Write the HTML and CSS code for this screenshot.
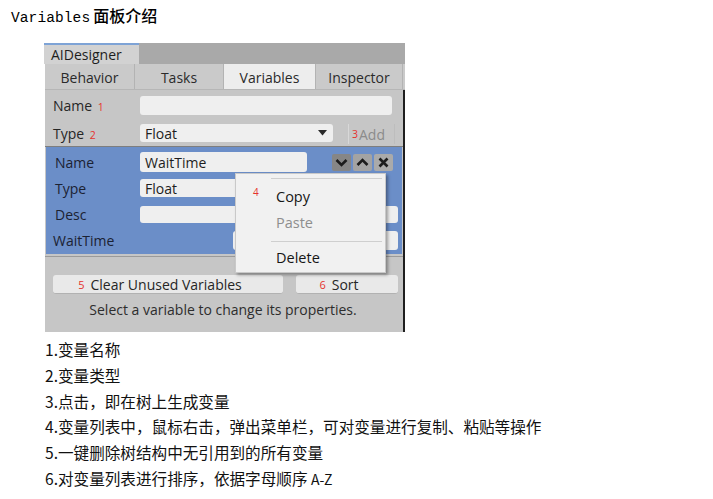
FILE: index.html
```html
<!DOCTYPE html>
<html lang="zh">
<head>
<meta charset="utf-8">
<title>Variables 面板介绍</title>
<link rel="stylesheet" href="styles.css">
</head>
<body>
<div class="title"><span class="title-lat">Variables</span><span class="title-cjk">面板介绍</span></div>

<div class="panel">
  <div class="head"><div class="head-tab">AIDesigner</div></div>
  <div class="toolbar">
    <div class="tb tb-behavior">Behavior</div>
    <div class="tb tb-tasks">Tasks</div>
    <div class="tb tb-vars active">Variables</div>
    <div class="tb tb-insp">Inspector</div>
  </div>
  <div class="body">
    <div class="row row-name">
      <span class="lbl">Name <i class="num">1</i></span>
      <div class="field field-name"></div>
    </div>
    <div class="row row-type">
      <span class="lbl">Type <i class="num">2</i></span>
      <div class="field dropdown"><span>Float</span>
        <svg class="caret" width="9" height="6" viewBox="0 0 9 6"><path d="M0 0H9L4.5 5.5Z" fill="#2a2a2a"/></svg>
      </div>
      <div class="add"><i class="num">3</i>Add</div>
    </div>
    <div class="sep"></div>
    <div class="var-box">
      <div class="vrow">
        <span class="vlbl">Name</span>
        <div class="field vf-name">WaitTime</div>
        <div class="ctrls">
          <div class="cbtn c-down"><svg width="13" height="9" viewBox="0 0 13 9"><path d="M1.5 2L6.5 7L11.5 2" fill="none" stroke="#1c1c1c" stroke-width="2.6"/></svg></div>
          <div class="cbtn c-up"><svg width="13" height="9" viewBox="0 0 13 9"><path d="M1.5 7L6.5 2L11.5 7" fill="none" stroke="#1c1c1c" stroke-width="2.6"/></svg></div>
          <div class="cbtn c-x"><svg width="11" height="11" viewBox="0 0 11 11"><path d="M1.5 1.5L9.5 9.5M9.5 1.5L1.5 9.5" fill="none" stroke="#1c1c1c" stroke-width="2.6"/></svg></div>
        </div>
      </div>
      <div class="vrow">
        <span class="vlbl">Type</span>
        <div class="field vf-type">Float</div>
      </div>
      <div class="vrow">
        <span class="vlbl">Desc</span>
        <div class="field vf-desc"></div>
      </div>
      <div class="vrow">
        <span class="vlbl vlbl-wait">WaitTime</span>
        <div class="field vf-wait"></div>
      </div>
    </div>
    <div class="sep sep-bottom"></div>
    <div class="btn-row">
      <div class="btn btn-clear"><i class="num">5</i>Clear Unused Variables</div>
      <div class="btn btn-sort"><i class="num">6</i>Sort</div>
    </div>
    <div class="hint">Select a variable to change its properties.</div>
  </div>

  <div class="menu">
    <div class="menu-sep"></div>
    <div class="mi mi-copy"><i class="num num-menu">4</i>Copy</div>
    <div class="mi mi-disabled">Paste</div>
    <div class="menu-sep menu-sep-mid"></div>
    <div class="mi">Delete</div>
  </div>
</div>

<div class="notes">
  <div class="note">1.变量名称</div>
  <div class="note">2.变量类型</div>
  <div class="note">3.点击，即在树上生成变量</div>
  <div class="note">4.变量列表中，鼠标右击，弹出菜单栏，可对变量进行复制、粘贴等操作</div>
  <div class="note">5.一键删除树结构中无引用到的所有变量</div>
  <div class="note">6.对变量列表进行排序，依据字母顺序 <span class="az">A-Z</span></div>
</div>
</body>
</html>
```

FILE: styles.css
```css
* { box-sizing: border-box; }

body {
  margin: 0;
  background: #ffffff;
  color: #111;
  font-family: "Liberation Sans", Arial, sans-serif;
}

.title {
  height: 43px;
  padding: 5px 0 0 11px;
  line-height: 20px;
  color: #000;
  white-space: nowrap;
}
.title-lat {
  font-family: "Liberation Mono", monospace;
  font-size: 14.5px;
  letter-spacing: 0.1px;
}
.title-cjk {
  font-family: "Noto Sans CJK SC", sans-serif;
  font-size: 16px;
  font-weight: 500;
  margin-left: 3px;
}

/* ---------- panel ---------- */
.panel {
  position: relative;
  margin-left: 45px;
  width: 360px;
  font-family: "Open Sans", "Liberation Sans", sans-serif;
  font-size: 14px;
  color: #262626;
}

.head {
  height: 21px;
  background: #a9a9a9;
  display: flex;
}
.head-tab {
  width: 95px;
  margin-left: -1px;
  background: #d2d2d2;
  border-top: 2px solid #7ea3d6;
  padding-left: 7px;
  line-height: 19px;
  color: #1e1e1e;
}

.toolbar {
  height: 26px;
  display: flex;
  background: #cacaca;
  border-bottom: 1px solid #b6b6b6;
}
.tb {
  display: flex;
  align-items: center;
  justify-content: center;
  border-right: 1px solid #b3b3b3;
  color: #2a2a2a;
  padding-top: 1px;
}
.tb-behavior { width: 90px; }
.tb-tasks { width: 89px; }
.tb-vars { width: 92px; }
.tb-insp { width: 87px; }
.tb.active { background: #ededed; }

.body {
  height: 242px;
  background: #c6c6c6;
  border-right: 2px solid #1f1f1f;
  padding-top: 6px;
}

.row {
  display: flex;
  padding-left: 8px;
}
.lbl {
  width: 87px;
  color: #262626;
}
.num {
  font-style: normal;
  color: #e5322d;
  font-size: 10.5px;
  margin-left: 2px;
}

.field {
  background: #efefef;
  border-radius: 3px;
  color: #1e1e1e;
  padding-left: 5px;
  display: flex;
  align-items: center;
}

.row-name { height: 19px; align-items: center; }
.field-name { width: 252px; height: 19px; }

.row-type { margin-top: 9px; height: 20px; align-items: flex-start; }
.row-type .lbl { line-height: 19px; }
.dropdown {
  width: 193px;
  height: 18px;
  justify-content: space-between;
  padding-right: 6px;
}
.caret { display: block; }
.add {
  margin-left: 15px;
  width: 47px;
  height: 20px;
  border-left: 1px solid #d8d8d8;
  border-right: 1px solid #bdbdbd;
  color: #8b8b8b;
  display: flex;
  align-items: center;
  padding-left: 3px;
}
.add .num { margin: 0 1px 0 0; }

.sep {
  margin-top: 2px;
  height: 1px;
  background: #7e7e7e;
}
.sep-bottom { margin-top: 2px; background: #9a9a9a; }

.var-box {
  margin: 0 1px;
  height: 107px;
  background: #6b8ec8;
  padding: 5px 0 0 9px;
  display: flex;
  flex-direction: column;
  gap: 6px;
}
.vrow {
  height: 20px;
  display: flex;
  align-items: center;
}
.vlbl {
  width: 85px;
  color: #1b2233;
}
.vlbl-wait { margin-left: -2px; width: 180px; }
.vf-name { width: 167px; height: 20px; }
.vf-type { width: 160px; height: 18px; }
.vf-desc { width: 258px; height: 17px; }
.vf-wait { width: 165px; height: 19px; }

.ctrls {
  display: flex;
  gap: 2px;
  margin-left: 25px;
  align-self: flex-start;
  margin-top: 2px;
}
.cbtn {
  width: 19px;
  height: 17px;
  display: flex;
  align-items: center;
  justify-content: center;
  border-radius: 2px;
}
.c-down { background: #868686; }
.c-up { background: #a3a3a3; }
.c-x { background: #aaaaaa; }
.cbtn svg { display: block; }

.btn-row {
  margin-top: 18px;
  display: flex;
  gap: 13px;
  padding-left: 8px;
}
.btn {
  height: 19px;
  background: #e9e9e9;
  border-radius: 3px;
  border-bottom: 1px solid #b2b2b2;
  display: flex;
  align-items: center;
  justify-content: center;
  padding-right: 16px;
  color: #262626;
}
.btn .num { margin: 0 6px 0 0; font-size: 11px; }
.btn-clear { width: 230px; }
.btn-sort { width: 102px; }

.hint {
  margin-top: 6px;
  line-height: 20px;
  text-align: center;
  color: #2d2d2d;
  padding-right: 2px;
}

/* ---------- context menu ---------- */
.menu {
  position: absolute;
  left: 190px;
  top: 130px;
  width: 151px;
  height: 100px;
  background: #f1f1f1;
  border: 1px solid #c9c9c9;
  box-shadow: 2px 2px 3px rgba(0, 0, 0, 0.35);
  padding-top: 4px;
  font-size: 14.5px;
}
.menu-sep {
  height: 1px;
  background: #cfcfcf;
  margin: 0 3px 0 35px;
}
.menu-sep-mid { margin-top: 5px; margin-bottom: 3px; }
.mi {
  height: 26px;
  line-height: 26px;
  padding-left: 40px;
  color: #161616;
  position: relative;
}
.mi-copy { margin-top: 5px; }
.mi-disabled { color: #8e8e8e; }
.num-menu {
  position: absolute;
  left: 15px;
  top: -5px;
  font-size: 10px;
}

/* ---------- notes ---------- */
.notes {
  padding: 5px 0 0 45px;
  font-family: "Noto Sans CJK SC", sans-serif;
  font-size: 15.6px;
  line-height: 25.8px;
  color: #111;
}
.note { white-space: nowrap; }
.az { font-size: 14px; }
```
